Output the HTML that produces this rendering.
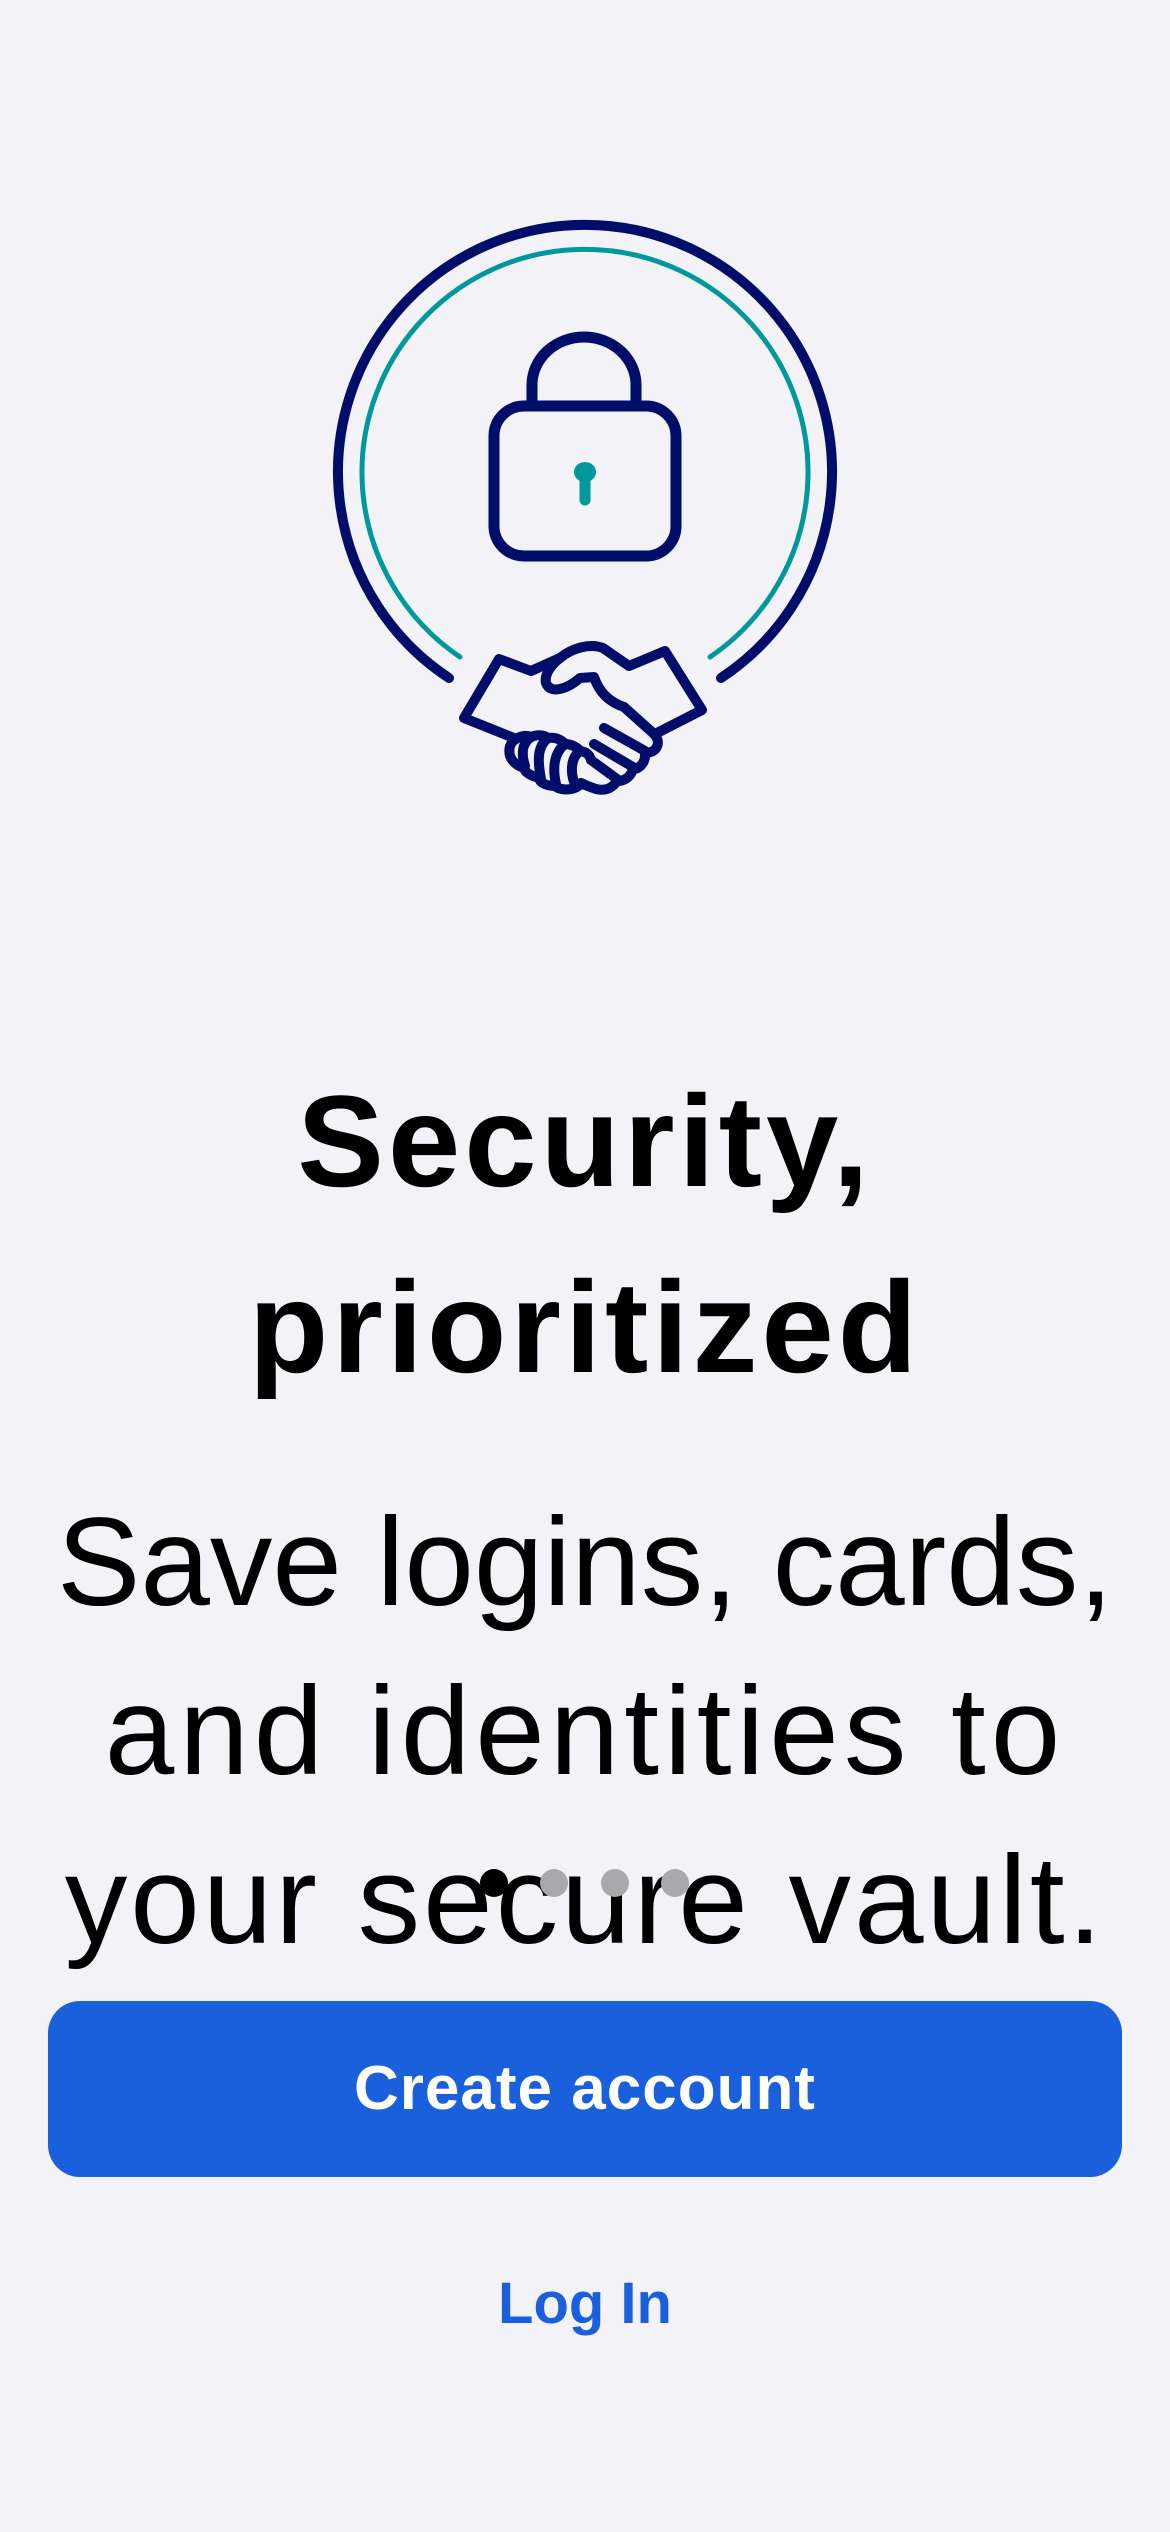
<!DOCTYPE html>
<html><head><meta charset="utf-8"><style>
html,body{margin:0;padding:0;}
body{width:1170px;height:2532px;background:#f2f2f7;position:relative;overflow:hidden;font-family:"Liberation Sans",sans-serif;}
.t{position:absolute;left:0;width:1170px;text-align:center;color:#000;}
#title{top:1048px;font-size:130px;font-weight:bold;line-height:186px;letter-spacing:4px;}
#body{top:1478px;font-size:125px;line-height:169px;}
.dot{position:absolute;top:1869px;width:28px;height:28px;border-radius:50%;background:#a9a9ab;}
#btn{position:absolute;left:48px;top:2001px;width:1074px;height:176px;border-radius:32px;background:#1a5fdc;color:#fff;font-weight:bold;font-size:62px;letter-spacing:1px;text-align:center;line-height:176px;}
#login{position:absolute;left:0;width:1170px;top:2264px;text-align:center;color:#1a5fdc;font-weight:bold;font-size:58px;line-height:80px;}
</style></head><body>
<svg width="1170" height="900" style="position:absolute;left:0;top:0" fill="none" stroke-linecap="round" stroke-linejoin="round">
  <path d="M449 678 A247 247 0 1 1 721 678" stroke="#000e69" stroke-width="10"/>
  <path d="M460 657 A223 223 0 1 1 710 657" stroke="#00989c" stroke-width="5"/>
  <path d="M532 402 V385 A52 48 0 0 1 636 385 V402" stroke="#000e69" stroke-width="11"/>
  <rect x="494" y="406" width="182" height="150" rx="30" stroke="#000e69" stroke-width="11"/>
  <ellipse cx="585" cy="472" rx="11" ry="10" fill="#00989c"/>
  <path d="M585 474 V500" stroke="#00989c" stroke-width="11"/>
  <g stroke="#000e69" stroke-width="10">
    <path d="M514 738 L464 718 L499 659 L531 671 L560 658 C572 648 590 643 603 648 L629 666 L665 651 L702 710 L655 734"/>
    <path d="M560 658 C552 664 544 674 546 683 C550 694 566 690 580 678 L594 677 C600 695 612 703 624 707 L653 733 C662 741 658 753 645 753 C646 764 638 769 633 769 C630 779 622 781 617 781 C612 789 604 791 596 789 C590 787 585 785 581 783 C576 791 560 791 555 786 C545 786 538 781 540 778 C530 776 525 772 524 768 C515 765 507 758 510 746 C513 738 524 734 531 737 C536 735 543 734 548 738 C556 737 562 740 565 744 C572 744 578 748 580 751 C588 752 590 756 591 760"/>
    <path d="M531 737 C524 742 520 750 525 766"/>
    <path d="M548 738 C538 746 537 758 541 779"/>
    <path d="M565 744 C555 752 552 766 556 784"/>
    <path d="M580 751 C570 758 570 775 576 786"/>
    <path d="M604 728 L645 751"/>
    <path d="M594 744 L633 767"/>
    <path d="M591 760 L617 779"/>
  </g>
</svg>
<div class="t" id="title">Security,<br>prioritized</div>
<div class="t" id="body">Save logins, cards,<br><span style="letter-spacing:5px">and identities to</span><br><span style="letter-spacing:3px">your secure vault.</span></div>
<div class="dot" style="left:480px;background:#000"></div>
<div class="dot" style="left:540px"></div>
<div class="dot" style="left:601px"></div>
<div class="dot" style="left:661px"></div>
<div id="btn">Create account</div>
<div id="login">Log In</div>
</body></html>
